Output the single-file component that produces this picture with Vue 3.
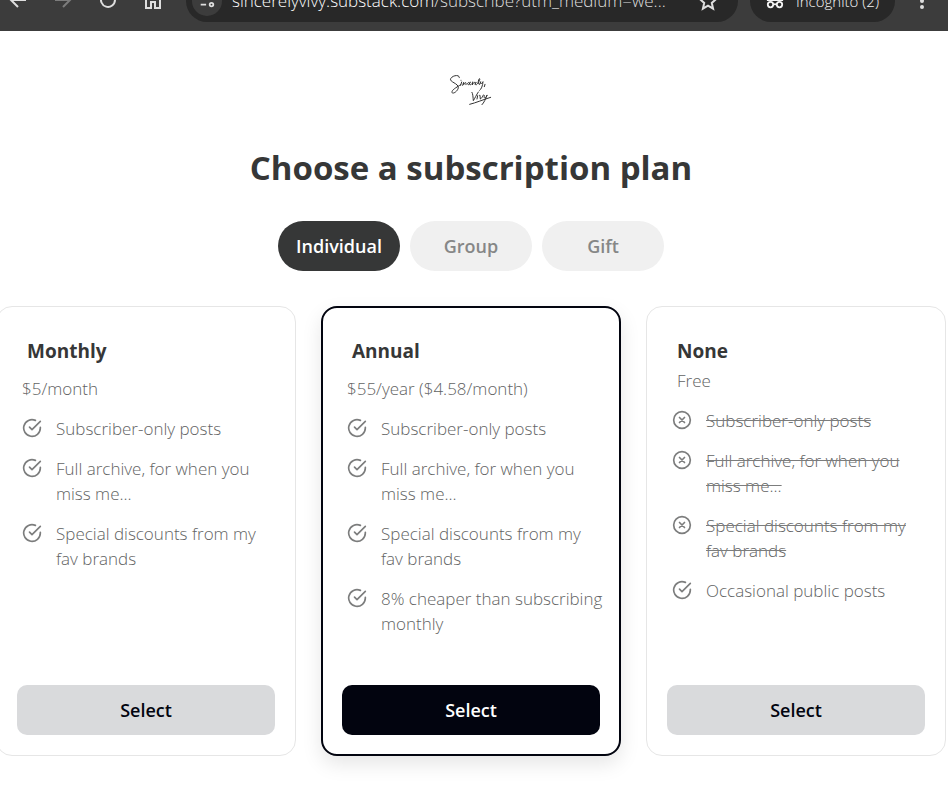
<script setup>
import { ref } from 'vue'

const tabs = ['Individual', 'Group', 'Gift']
const activeTab = ref('Individual')

const perks = ['Subscriber-only posts', 'Full archive, for when you miss me...', 'Special discounts from my fav brands']

const plans = [
  {
    name: 'Monthly',
    price: '$5/month',
    features: perks.map((text) => ({ text, included: true }))
  },
  {
    name: 'Annual',
    price: '$55/year ($4.58/month)',
    highlighted: true,
    features: [...perks, '8% cheaper than subscribing monthly'].map((text) => ({ text, included: true }))
  },
  {
    name: 'None',
    price: 'Free',
    free: true,
    features: [
      ...perks.map((text) => ({ text, included: false })),
      { text: 'Occasional public posts', included: true }
    ]
  }
]
</script>

<template>
  <header class="toolbar">
    <nav class="nav-icons">
      <button class="tool" aria-label="Back">
        <svg viewBox="0 0 20 20"><path d="M18 9H3M10 2L3 9l7 7" /></svg>
      </button>
      <button class="tool dim" aria-label="Forward">
        <svg viewBox="0 0 20 20"><path d="M2 9h15M10 2l7 7-7 7" /></svg>
      </button>
      <button class="tool" aria-label="Reload">
        <svg viewBox="0 0 20 20"><path d="M17 9a7 7 0 1 1-2-5l2 2M17 1v5h-5" /></svg>
      </button>
      <button class="tool" aria-label="Home">
        <svg viewBox="0 0 20 20"><path d="M3 8l7-6 7 6v9h-5v-6H8v6H3z" /></svg>
      </button>
    </nav>
    <div class="address">
      <span class="site-info">
        <svg viewBox="0 0 20 20"><path d="M10 4h7M3 14h6" /><circle cx="5" cy="4" r="2" /><circle cx="15" cy="14" r="2" /></svg>
      </span>
      <span class="url"><span class="host">sincerelyvivy.substack.com</span>/subscribe?utm_medium=we...</span>
      <button class="tool star" aria-label="Bookmark">
        <svg viewBox="0 0 20 20"><path d="M10 2l2.4 5.4 5.8.6-4.400 3.900 1.300 5.800L10 14.700 4.900 17.700l1.300-5.800L1.800 8l5.800-.6z" /></svg>
      </button>
    </div>
    <div class="incognito">
      <svg viewBox="0 0 20 20"><path d="M1 9h18M5 8l1-5h8l1 5M8 14q2-1 4 0" /><circle cx="5" cy="14" r="3" /><circle cx="15" cy="14" r="3" /></svg>
      <span>Incognito (2)</span>
    </div>
    <button class="tool menu" aria-label="Menu">
      <svg viewBox="0 0 20 20"><circle cx="10" cy="4" r="1" /><circle cx="10" cy="10" r="1" /><circle cx="10" cy="16" r="1" /></svg>
    </button>
  </header>

  <main class="page">
    <svg class="signature" viewBox="42 9 162 162" role="img" aria-label="Sincerely, Vivy">
      <path d="M88 53C90 43 68 45 62 56C57 66 86 70 85 83C83 96 64 105 66 95C68 87 84 80 92 74" />
      <path d="M95 66L92 76M93 61v0M98 76L101 67L101 74C105 67 109 64 108 74M117 67C112 66 110 76 117 74M118 71C124 68 122 64 119 68C117 74 121 77 126 71M128 66L127 75C129 69 132 66 134 67M135 72C141 69 139 64 136 68C134 75 139 77 143 70C149 63 151 55 148 56C144 60 143 75 149 73L152 65C150 74 155 72 159 65C158 77 154 88 149 91M165 73l-2 7" />
      <path d="M126 97C129 101 129 113 130 122C134 116 140 103 145 96M143 107l-2 10M149 106v0M150 107l1 10C155 115 158 110 160 105M163 107c-3 10 4 9 8-1M171 106C167 117 162 128 156 134" />
      <path d="M119 133C139 128 159 119 182 112" />
    </svg>

    <h1>Choose a subscription plan</h1>

    <div class="tabs">
      <button
        v-for="tab in tabs"
        :key="tab"
        class="tab"
        :class="{ active: tab === activeTab }"
        :aria-pressed="tab === activeTab"
        @click="activeTab = tab"
      >{{ tab }}</button>
    </div>

    <div class="plans">
      <section v-for="plan in plans" :key="plan.name" class="card" :class="{ highlighted: plan.highlighted, free: plan.free }">
        <h2>{{ plan.name }}</h2>
        <p class="price">{{ plan.price }}</p>
        <ul>
          <li v-for="feature in plan.features" :key="feature.text" :class="{ excluded: !feature.included }">
            <svg viewBox="0 0 24 24" aria-hidden="true">
              <template v-if="feature.included">
                <path d="M22 11.080V12a10 10 0 1 1-5.930-9.140" />
                <path d="M9 11l3 3L22 4" />
              </template>
              <template v-else>
                <circle cx="12" cy="12" r="10" />
                <path d="M15 9l-6 6M9 9l6 6" />
              </template>
            </svg>
            <span>{{ feature.text }}</span>
          </li>
        </ul>
        <button class="select">Select</button>
      </section>
    </div>
  </main>
</template>

<style>
body {
  background: #fff;
  overflow-x: hidden;
}
</style>

<style scoped>
* {
  box-sizing: border-box;
}

button {
  border: 0;
  padding: 0;
  font: inherit;
  cursor: pointer;
}

svg {
  display: block;
  flex: none;
  fill: none;
  stroke: currentColor;
  stroke-width: 2;
}

.toolbar {
  display: flex;
  align-items: flex-end;
  height: 31px;
  padding: 0 16px 9px 8px;
  overflow: hidden;
  background: #3c3c3c;
  color: #dedede;
  font-family: "Open Sans", "Noto Sans", sans-serif;
}

.tool {
  display: flex;
  align-items: center;
  justify-content: center;
  width: 20px;
  height: 42px;
  background: none;
  color: inherit;
}

.tool svg {
  width: 20px;
  height: 20px;
}

.tool.dim {
  color: #7c7c7c;
}

.nav-icons {
  display: flex;
  gap: 25px;
  margin-right: 23px;
}

.address {
  display: flex;
  flex: 1;
  align-items: center;
  min-width: 0;
  height: 42px;
  padding: 0 20px 0 6px;
  border-radius: 21px;
  background: #282828;
}

.site-info {
  display: flex;
  flex: none;
  align-items: center;
  justify-content: center;
  width: 30px;
  height: 30px;
  margin-right: 10px;
  border-radius: 50%;
  background: #3c3c3c;
}

.site-info svg {
  width: 18px;
  height: 18px;
}

.url {
  flex: 1;
  overflow: hidden;
  white-space: nowrap;
  font-size: 17px;
  font-weight: 300;
  line-height: 24px;
  color: #dedede;
}

.host {
  color: #fff;
}

.incognito {
  display: flex;
  flex: none;
  align-items: center;
  justify-content: center;
  gap: 12px;
  width: 145px;
  height: 42px;
  margin: 0 17px 0 12px;
  border-radius: 21px;
  background: #282828;
  color: #f4f4f4;
  font-size: 15px;
  font-weight: 300;
  white-space: nowrap;
}

.incognito svg {
  width: 18px;
  height: 18px;
}

.menu svg {
  fill: currentColor;
}

.page {
  display: flex;
  flex-direction: column;
  align-items: center;
  margin: 0 2px 0 -4px;
  padding: 32px 0 46px;
  color: #363737;
  font-family: "Open Sans", "Noto Sans", sans-serif;
}

.signature {
  width: 54px;
  height: 54px;
  stroke: #333;
  stroke-width: 3;
  stroke-linecap: round;
}

h1 {
  margin: 28px 0 30px;
  font-size: 33px;
  font-weight: 700;
  line-height: 46px;
}

.tabs {
  display: flex;
  gap: 10px;
  margin-bottom: 35px;
}

.tab {
  min-width: 122px;
  height: 50px;
  border-radius: 25px;
  background: #f0f0f0;
  color: #868787;
  font-size: 18px;
  font-weight: 600;
}

.tab.active {
  background: #363737;
  color: #fff;
}

.plans {
  display: grid;
  grid-template-columns: repeat(3, 1fr);
  gap: 25px;
  width: 100%;
}

.card {
  display: flex;
  flex-direction: column;
  padding: 32px 15px 20px 20px;
  border: 1px solid #e6e6e6;
  border-radius: 16px;
  background: #fff;
}

.card.highlighted {
  padding: 31px 14px 19px 19px;
  border: 2px solid #02040f;
  box-shadow: 0 8px 20px rgba(0, 0, 0, 0.1);
}

h2 {
  margin: 0 10px;
  font-size: 19px;
  font-weight: 700;
  line-height: 25px;
}

.price {
  margin: 12px 5px 15px;
  color: #626363;
  font-size: 17px;
  font-weight: 300;
  line-height: 25px;
}

.free .price {
  margin: 4px 10px 15px;
}

ul {
  display: grid;
  gap: 15px;
  margin: 0 0 49px;
  padding: 0 0 0 5px;
  list-style: none;
}

li {
  display: flex;
  gap: 14px;
  color: #626363;
  font-size: 17px;
  font-weight: 300;
  line-height: 25px;
}

li svg {
  width: 20px;
  height: 20px;
  margin-top: 2px;
  color: #7c7d7d;
  stroke-linecap: round;
  stroke-linejoin: round;
}

.excluded span {
  text-decoration: line-through #7c7d7d;
}

.select {
  height: 50px;
  margin: auto 5px 0 0;
  border-radius: 10px;
  background: #d9dadc;
  color: #02040f;
  font-size: 18px;
  font-weight: 600;
}

.highlighted .select {
  background: #02040f;
  color: #fff;
}
</style>
